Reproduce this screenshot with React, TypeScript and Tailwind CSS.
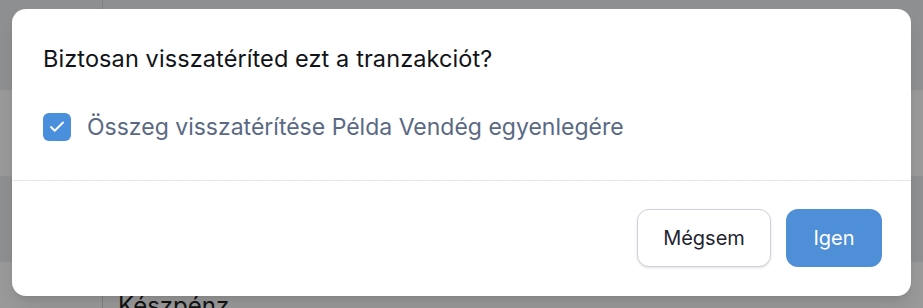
import { Check } from "lucide-react";

const rows = [
    { bg: "bg-[#eceef1]", h: "h-[90px]", text: "" },
    { bg: "bg-white", h: "h-[86px]", text: "" },
    { bg: "bg-[#eceef1]", h: "h-[86px]", text: "" },
    { bg: "bg-white", h: "h-[86px]", text: "Készpénz" },
];

export default function App() {
    return (
        <div className="relative h-[308px] w-[923px] overflow-hidden font-['Inter',sans-serif]">
            {/* table behind the dialog */}
            <div className="flex flex-col">
                {rows.map((row, i) => (
                    <div key={i} className={`flex ${row.h} ${row.bg}`}>
                        <div className="w-[103px] border-r border-[#d6d8dc]" />
                        <div className="pl-[15px] pt-[28px] text-[24px] leading-8 text-[#222]">
                            {row.text}
                        </div>
                    </div>
                ))}
            </div>

            <div className="absolute inset-0 bg-black/40" />

            <div className="absolute left-[12px] top-[9px] w-[899px] rounded-[14px] bg-white shadow-lg">
                <div className="px-[31px] pb-[37px] pt-[34px]">
                    <h2 className="text-[23.5px] leading-8 tracking-[0.1px] text-[#111318]">
                        Biztosan visszatéríted ezt a tranzakciót?
                    </h2>

                    <label className="mt-[36px] flex items-center gap-4">
                        <span className="flex h-7 w-7 items-center justify-center rounded-[6px] bg-[#4a8fdb]">
                            <Check className="h-[18px] w-[18px] text-white" strokeWidth={2.5} />
                        </span>
                        <span className="text-[23px] leading-8 text-[#5a6983]">
                            Összeg visszatérítése Példa Vendég egyenlegére
                        </span>
                    </label>
                </div>

                <div className="flex justify-end gap-[15px] border-t border-[#e4e6ea] px-[29px] pb-[29px] pt-[28px]">
                    <button className="h-[58px] w-[134px] rounded-xl border border-[#cdd3dc] bg-white text-[20px] text-[#1f2430] shadow-sm">
                        Mégsem
                    </button>
                    <button className="h-[58px] w-[96px] rounded-xl bg-[#4f8fd8] text-[20px] text-white">
                        Igen
                    </button>
                </div>
            </div>
        </div>
    );
}
